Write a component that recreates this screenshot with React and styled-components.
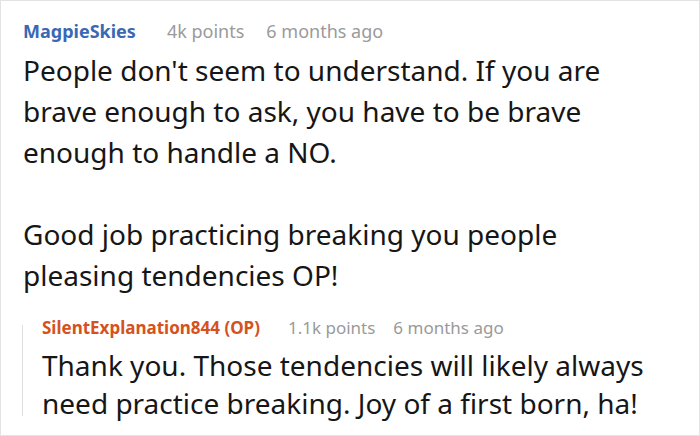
import React from "react";
import styled, { createGlobalStyle } from "styled-components";

const Global = createGlobalStyle`
  html, body { margin: 0; padding: 0; background: #fff; }
  body { font-family: "Noto Sans", "Open Sans", sans-serif; }
`;

const Card = styled.div`
  box-sizing: border-box;
  width: 700px;
  height: 436px;
  border: 1px solid #e3e3e3;
  padding: 16px 50px 0 22px;
  overflow: hidden;
`;

const Meta = styled.div`
  display: flex;
  align-items: baseline;
  gap: ${(p) => (p.$small ? 18 : 22)}px;
  font-size: ${(p) => (p.$small ? 17 : 18)}px;
  line-height: 28px;
  color: #9a9a9a;
  white-space: nowrap;
`;

const Author = styled.span`
  font-weight: 700;
  color: ${(p) => p.$color};
  margin-right: ${(p) => (p.$small ? 10 : 9)}px;
`;

const Body = styled.p`
  margin: ${(p) => p.$mt || 0}px 0 0;
  font-size: 28px;
  line-height: ${(p) => (p.$small ? 38 : 41)}px;
  color: #161616;
`;

const Reply = styled.div`
  position: relative;
  margin: 18px -40px 0 0;
  padding-left: 19px;
  &::before {
    content: "";
    position: absolute;
    left: -1px;
    top: 11px;
    bottom: 6px;
    width: 1px;
    background: #dedede;
  }
`;

export default function App() {
  return (
    <>
      <Global />
      <Card>
        <Meta>
          <Author $color="#3a68b4">MagpieSkies</Author>
          <span>4k points</span>
          <span>6 months ago</span>
        </Meta>
        <Body $mt={5}>
          People don't seem to understand. If you are brave enough to ask, you have to be brave enough to handle a NO.
        </Body>
        <Body $mt={41}>
          Good job practicing breaking you people pleasing tendencies OP!
        </Body>
        <Reply>
          <Meta $small>
            <Author $small $color="#d5521c">SilentExplanation844 (OP)</Author>
            <span>1.1k points</span>
            <span>6 months ago</span>
          </Meta>
          <Body $small $mt={4}>
            Thank you. Those tendencies will likely always need practice breaking. Joy of a first born, ha!
          </Body>
        </Reply>
      </Card>
    </>
  );
}
